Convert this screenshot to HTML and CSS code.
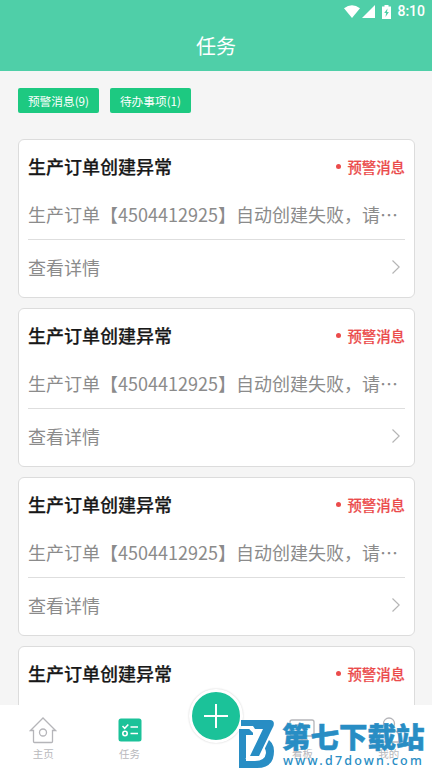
FILE: index.html
```html
<!DOCTYPE html>
<html lang="zh-CN">
<head>
<meta charset="utf-8">
<title>任务</title>
<link rel="stylesheet" href="styles.css">
</head>
<body>
<div class="app">
  <header class="header">
    <div class="status">
      <svg class="wifi" viewBox="0 0 16 13"><path d="M0 3.2Q8-2.8 16 3.2L8 13Z"/></svg>
      <svg class="signal" viewBox="0 0 13 13"><path d="M13 0V13H0Z"/></svg>
      <svg class="battery" viewBox="0 0 9 14"><path d="M2.5 0h4v1.5H9V14H0V1.5h2.5Z"/><path class="bolt" d="M5.5 3.5L2.2 8H4.1L3.5 12 6.9 7H5Z"/></svg>
      <span>8:10</span>
    </div>
    <h1>任务</h1>
  </header>
  <main class="content">
    <div class="filters"><button>预警消息(9)</button><button>待办事项(1)</button></div>
    <section class="card">
      <div class="card-head"><h2>生产订单创建异常</h2><span class="tag">预警消息</span></div>
      <p>生产订单【4504412925】自动创建失败，请…</p>
      <div class="detail"><span>查看详情</span><svg viewBox="0 0 8 14"><path d="M.5.5L7.2 7 .5 13.5"/></svg></div>
    </section>
    <section class="card">
      <div class="card-head"><h2>生产订单创建异常</h2><span class="tag">预警消息</span></div>
      <p>生产订单【4504412925】自动创建失败，请…</p>
      <div class="detail"><span>查看详情</span><svg viewBox="0 0 8 14"><path d="M.5.5L7.2 7 .5 13.5"/></svg></div>
    </section>
    <section class="card">
      <div class="card-head"><h2>生产订单创建异常</h2><span class="tag">预警消息</span></div>
      <p>生产订单【4504412925】自动创建失败，请…</p>
      <div class="detail"><span>查看详情</span><svg viewBox="0 0 8 14"><path d="M.5.5L7.2 7 .5 13.5"/></svg></div>
    </section>
    <section class="card">
      <div class="card-head"><h2>生产订单创建异常</h2><span class="tag">预警消息</span></div>
    </section>
  </main>
  <nav class="tabs">
    <div class="tab"><svg viewBox="0 0 28 28"><path d="M4.5 14.5H1.5L14 2 26.5 14.5H23.5V25.5Q23.500 26.500 22.500 26.500H5.500Q4.500 26.500 4.500 25.500Z"/><circle cx="14" cy="16.500" r="3.500"/></svg><span>主页</span></div>
    <div class="tab active"><svg viewBox="0 0 28 28"><rect x="2.500" y="2.500" width="23" height="23" rx="2.500"/><path d="M6.500 10l2.200 2.300L12.300 8.500M14.500 11H22M14.500 17.500H22"/><circle cx="9" cy="17.500" r="2.200"/></svg><span>任务</span></div>
    <div class="tab add-slot"><button class="add" aria-label="新增"><svg viewBox="0 0 24 24"><path d="M12 0V24M0 12H24"/></svg></button></div>
    <div class="tab"><svg viewBox="0 0 28 28"><rect x="2" y="4" width="24" height="16" rx="2"/><path d="M7 9h14M14 20v4M8 24h12"/></svg><span>看板</span></div>
    <div class="tab"><svg viewBox="0 0 28 28"><circle cx="14" cy="7.500" r="5.500"/><path d="M4 26V21Q4 14.500 10.500 14.500H17.500Q24 14.500 24 21V26Z"/></svg><span>我的</span></div>
  </nav>
  <div class="watermark">
    <svg viewBox="0 0 36 48"><path d="M0 9H14V15H7V41H16Q26 41 27 33Q27 28 23 26L27 18Q35 22 35 31Q35 48 18 48H0Z"/><path class="seven" d="M11 7H34L19.500 37H9.500L20 12H16Z"/><path d="M2 0H31Q36 0 34.500 6L32 11 20 36H11L24 9H16L14 6H2Z"/></svg>
    <div class="watermark-copy"><strong>第七下载站</strong><span>www.d7down.com</span></div>
  </div>
</div>
</body>
</html>
```

FILE: styles.css
```css
* { box-sizing: border-box; }
body, h1, h2, p { margin: 0; }
body { font-family: "Noto Sans CJK SC", sans-serif; background: #f5f5f5; }
button { border: 0; padding: 0; font-family: inherit; }
svg { display: block; }
.app { position: relative; width: 432px; height: 768px; overflow: hidden; display: flex; flex-direction: column; }
.header { height: 71px; flex: none; background: #4fcfa8; color: #fff; }
.status { height: 23px; display: flex; align-items: center; justify-content: flex-end; padding-right: 7px; font: 500 14px/23px Roboto, sans-serif; }
.status svg { fill: #fff; }
.wifi { width: 16px; height: 13px; }
.signal { width: 13px; height: 13px; margin-left: 2px; }
.battery { width: 9px; height: 14px; margin: 0 6px 0 7px; }
.status .bolt { fill: #4fcfa8; }
.header h1 { font-size: 20px; line-height: 46px; font-weight: 400; text-align: center; }
.content { flex: 1; min-height: 0; overflow: hidden; padding: 17px 17px 0 18px; }
.filters { display: flex; gap: 11px; margin-bottom: 26px; }
.filters button { width: 81px; height: 25px; border-radius: 2px; background: #1dc981; color: #fff; font-size: 11.700px; line-height: 25px; }
.card { height: 159px; margin-bottom: 10px; padding: 0 9px; border: 1px solid #dcdcdc; border-radius: 6px; background: #fff; }
.card-head { height: 53px; display: flex; align-items: center; justify-content: space-between; }
.card h2 { font-size: 18px; line-height: 25px; padding-bottom: 1px; font-weight: 500; color: #181818; -webkit-text-stroke: .25px #181818; }
.tag { display: flex; align-items: center; gap: 6px; color: #eb4b4b; font-size: 14.400px; line-height: 22px; font-weight: 500; -webkit-text-stroke: .2px #eb4b4b; }
.tag::before { content: ""; width: 5px; height: 5px; border-radius: 50%; background: #eb4b4b; }
.card p { height: 47px; border-bottom: 1px solid #dedede; color: #8b8b8b; font-size: 18px; line-height: 42px; white-space: nowrap; overflow: hidden; }
.detail { height: 54px; padding-right: 5px; display: flex; align-items: center; justify-content: space-between; color: #8b8b8b; font-size: 18px; line-height: 26px; }
.detail svg { width: 8px; height: 14px; fill: none; stroke: #b5b5b5; stroke-width: 1.200; }
.tabs { height: 63px; flex: none; background: #fff; display: flex; }
.tab { flex: 1; display: flex; flex-direction: column; align-items: center; padding-top: 11px; color: #b8b8bc; font-size: 10.500px; line-height: 16px; }
.tab > svg { width: 28px; height: 28px; margin-bottom: 2px; fill: none; stroke: #b5b5b9; stroke-width: 1.300; }
.active rect { fill: #1bc299; stroke: none; }
.active > svg { stroke: #fff; stroke-width: 1.600; }
.add-slot { padding: 0; }
.add { width: 54px; height: 54px; flex: none; margin-top: -16px; border-radius: 50%; border: 3px solid #fff; background: #1bc299; box-shadow: 0 0 2px #ccc; display: grid; place-items: center; }
.add svg { width: 24px; height: 24px; fill: none; stroke: #fff; stroke-width: 2; }
.watermark { position: absolute; left: 239px; top: 720px; display: flex; gap: 7px; color: #288dc4; }
.watermark > svg { width: 36px; height: 48px; fill: #288dc4; }
.watermark .seven { fill: #fff; stroke: #fff; stroke-width: 4; }
.watermark-copy { display: flex; flex-direction: column; }
.watermark strong { font-size: 28.500px; line-height: 32px; font-weight: 900; white-space: nowrap; -webkit-text-stroke: .5px #288dc4; }
.watermark span { font: 500 12.500px/17px "Noto Sans", sans-serif; letter-spacing: 2.200px; padding-left: 1px; }
```
